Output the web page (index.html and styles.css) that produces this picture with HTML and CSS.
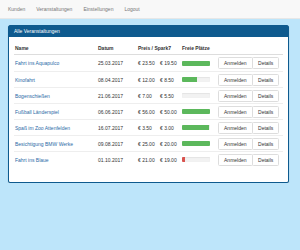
FILE: index.html
```html
<!DOCTYPE html>
<html>
<head>
  <title>Alle Veranstaltungen</title>
  <link rel="stylesheet" href="styles.css">
</head>
<body>
  <div class="navbar">
    <a href="#">Kunden</a>
    <a href="#">Veranstaltungen</a>
    <a href="#">Einstellungen</a>
    <a href="#">Logout</a>
  </div>

  <div class="container">
    <div class="panel">
      <div class="panel-heading">Alle Veranstaltungen</div>
      <div class="panel-body">
        <table class="events">
          <colgroup>
            <col class="c-name"><col class="c-date"><col class="c-price"><col class="c-spark">
            <col class="c-free"><col class="c-join"><col class="c-details">
          </colgroup>
          <thead>
            <tr>
              <th>Name</th>
              <th>Datum</th>
              <th colspan="2">Preis / Spark7</th>
              <th>Freie Plätze</th>
              <th></th>
              <th></th>
            </tr>
          </thead>
          <tbody>
            <tr>
              <td><a href="#">Fahrt ins Aquapulco</a></td>
              <td>25.03.2017</td>
              <td>€ 23.50</td><td>€ 19.50</td>
              <td><div class="progress"><div class="bar" style="width: 100%"></div></div></td>
              <td><button>Anmelden</button></td>
              <td><button>Details</button></td>
            </tr>
            <tr>
              <td><a href="#">Kinofahrt</a></td>
              <td>08.04.2017</td>
              <td>€ 12.00</td><td>€ 8.50</td>
              <td><div class="progress"><div class="bar" style="width: 55%"></div></div></td>
              <td><button>Anmelden</button></td>
              <td><button>Details</button></td>
            </tr>
            <tr>
              <td><a href="#">Bogenschießen</a></td>
              <td>21.06.2017</td>
              <td>€ 7.00</td><td>€ 5.50</td>
              <td><div class="progress"><div class="bar" style="width: 0%"></div></div></td>
              <td><button>Anmelden</button></td>
              <td><button>Details</button></td>
            </tr>
            <tr>
              <td><a href="#">Fußball Länderspiel</a></td>
              <td>06.06.2017</td>
              <td>€ 56.00</td><td>€ 50.00</td>
              <td><div class="progress"><div class="bar" style="width: 100%"></div></div></td>
              <td><button>Anmelden</button></td>
              <td><button>Details</button></td>
            </tr>
            <tr>
              <td><a href="#">Spaß im Zoo Attenfelden</a></td>
              <td>16.07.2017</td>
              <td>€ 3.50</td><td>€ 3.00</td>
              <td><div class="progress"><div class="bar" style="width: 95%"></div></div></td>
              <td><button>Anmelden</button></td>
              <td><button>Details</button></td>
            </tr>
            <tr>
              <td><a href="#">Besichtigung BMW Werke</a></td>
              <td>09.08.2017</td>
              <td>€ 25.00</td><td>€ 20.00</td>
              <td><div class="progress"><div class="bar" style="width: 100%"></div></div></td>
              <td><button>Anmelden</button></td>
              <td><button>Details</button></td>
            </tr>
            <tr>
              <td><a href="#">Fahrt ins Blaue</a></td>
              <td>01.10.2017</td>
              <td>€ 21.00</td><td>€ 19.00</td>
              <td><div class="progress"><div class="bar danger" style="width: 10%"></div></div></td>
              <td><button>Anmelden</button></td>
              <td><button>Details</button></td>
            </tr>
          </tbody>
        </table>
      </div>
    </div>
  </div>
</body>
</html>
```

FILE: styles.css
```css
body {
  margin: 0;
  background: #bde5fa;
  font-family: "Liberation Sans", Arial, sans-serif;
  font-size: 5px;
  color: #333;
}
a {
  color: #2a6aa6;
  text-decoration: none;
}
.navbar {
  height: 18px;
  display: flex;
  align-items: center;
  gap: 11px;
  padding-left: 8px;
  background: #f8f8f8;
  border-bottom: 1px solid #e7e7e7;
}
.navbar a {
  color: #777;
}
.container {
  padding: 6px 11px 0 8px;
}
.panel {
  background: white;
  border: 1px solid #0e5a8e;
  border-radius: 2px;
  box-shadow: 0 1px 1px rgba(0, 0, 0, 0.25);
}
.panel-heading {
  height: 11px;
  line-height: 11px;
  padding: 0 5px;
  background: #0e5a8e;
  color: white;
}
.panel-body {
  padding: 4px 5px 5px;
}
.events {
  width: 100%;
  border-collapse: collapse;
  table-layout: fixed;
  margin-bottom: 10px;
}
.c-name { width: 83px; }
.c-date { width: 40px; }
.c-price { width: 22px; }
.c-spark { width: 22px; }
.c-free { width: 36px; }
.c-join { width: 34px; }
.events th {
  text-align: left;
  font-weight: bold;
  height: 13px;
  padding: 0 1px;
  border-bottom: 1px solid #ddd;
}
.events td {
  height: 15px;
  padding: 0 1px;
  border-top: 1px solid #eee;
  white-space: nowrap;
}
.events tbody tr:first-child td {
  border-top: none;
  height: 16px;
}
.progress {
  width: 28px;
  height: 5px;
  background: #f2f2f2;
  border-radius: 1px;
  box-shadow: inset 0 0.5px 1px rgba(0, 0, 0, 0.1);
  overflow: hidden;
}
.bar {
  height: 100%;
  background: #5cb85c;
}
.bar.danger {
  background: #d9534f;
}
button {
  height: 12px;
  padding: 0 5px;
  font-family: inherit;
  font-size: 5px;
  color: #333;
  background: white;
  border: 1px solid #ddd;
  border-radius: 1.5px;
}
```
